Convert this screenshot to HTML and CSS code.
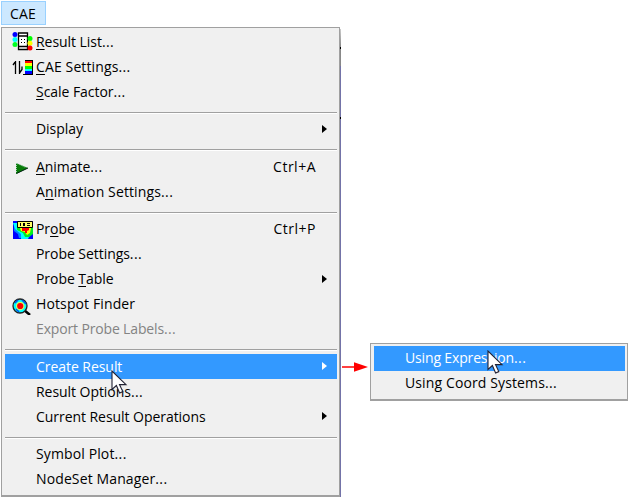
FILE: index.html
```html
<!DOCTYPE html>
<html lang="en">
<head>
<meta charset="utf-8">
<title>CAE menu</title>
<link rel="stylesheet" href="styles.css">
</head>
<body>
<div class="tab">CAE</div>
<div class="stage">
<nav class="menu main">
  <div class="item"><span class="icon"><svg width="22" height="22" viewBox="0 0 22 22"><path fill="#fff" d="M7 3h8v16H7z"/><g stroke="#000" fill="none" stroke-width="1.3"><path d="M6.500 3h9v16.500h-9zM6.500 6h9M6.500 16.500h9"/></g><path d="M9 9h1v1H9zm3 0h1v1h-1zM9 12h1v1H9zm3 0h1v1h-1z"/><circle cx="3" cy="4.500" r="2.500" fill="#00f"/><circle cx="3" cy="9.500" r="2.500" fill="#0ff"/><circle cx="3" cy="14.500" r="2.500" fill="#0f2"/><circle cx="18" cy="8.500" r="2.500" fill="#0f0"/><circle cx="18" cy="13.200" r="2.500" fill="#ff0"/><circle cx="18" cy="18" r="2.500" fill="#f00"/></svg></span><span class="label"><u>R</u>esult List<span class="dots">...</span></span></div>
  <div class="item"><span class="icon"><svg width="22" height="22" viewBox="0 0 22 22"><path d="M3.500 6v13M1 10l2.500-3.500M7.500 6v13M7.500 18l2.500-3.500v-3" stroke="#000" stroke-width="1.300" fill="none"/><path d="M13 5h8v15h-10v-1h2z"/><path fill="#f00" d="M13 6h7v2h-7z"/><path fill="#ff0" d="M13 8h7v3h-7z"/><path fill="#0f0" d="M13 11h7v3h-7z"/><path fill="#0ff" d="M13 14h7v2h-7z"/><path fill="#00f" d="M13 16h7v3h-7z"/></svg></span><span class="label wide"><u>C</u>AE Settings<span class="dots">...</span></span></div>
  <div class="item"><span class="icon"></span><span class="label"><u>S</u>cale Factor<span class="dots">...</span></span></div>
  <div class="sep"></div>
  <div class="item half"><span class="icon"></span><span class="label">Display</span><i class="arrow"></i></div>
  <div class="sep"></div>
  <div class="item"><span class="icon"><svg width="22" height="22" viewBox="0 0 22 22"><path d="M4 8l12 5-12 6z" fill="#087b08"/><path d="M4.500 8v10M5 8.500l9 4" stroke="#9ca" stroke-dasharray="1 1" fill="none"/><path d="M4.500 18.500L16 13" stroke="#021" fill="none"/></svg></span><span class="label"><u>A</u>nimate<span class="dots">...</span></span><span class="key">Ctrl+A</span></div>
  <div class="item"><span class="icon"></span><span class="label wide">A<u>n</u>imation Settings<span class="dots">...</span></span></div>
  <div class="sep"></div>
  <div class="item half"><span class="icon"><svg width="22" height="22" viewBox="0 0 22 22"><path fill="#00f" d="M1 3h20v18H1z"/><path fill="#08f" d="M2 7h4l2 5 3 3-1 5H7l-1-4-4-3z"/><path fill="#0ff" d="M1 5h4v4l5 4 8 4-2 4H9v-5l-6-5z"/><path fill="#0e2" d="M5 9h16v7l-4 3h-4l-2-4-6-3z"/><path fill="#ff0" d="M8 10h11l-1 5-3 2-2-3-4-1z"/><path fill="#f00" d="M10 10h7v2l-2 1v2h-2v-2h-3z"/><path fill="#ff6" stroke="#000" d="M5.500 3.500h15v6h-15z"/><path d="M8 5h1v3H8zm3 0h2v3h-2zm4 0h3v1h-3zm0 2h3v1h-3z"/></svg></span><span class="label">Pr<u>o</u>be</span><span class="key">Ctrl+P</span></div>
  <div class="item half"><span class="icon"></span><span class="label">Probe Settings<span class="dots">...</span></span></div>
  <div class="item half"><span class="icon"></span><span class="label">Probe <u>T</u>able</span><i class="arrow"></i></div>
  <div class="item half"><span class="icon"><svg width="22" height="22" viewBox="0 0 22 22"><path d="M12 17l6 5" stroke="#000" stroke-width="2.500"/><circle cx="8" cy="13" r="7" fill="#0ff" stroke="#222" stroke-width="1.300"/><path d="M3 10l3-3M10 7l4 4M4 16l3 3" stroke="#05e" stroke-width="1.500"/><circle cx="8.200" cy="13" r="4.300" fill="#cf6"/><circle cx="8.200" cy="13" r="3.100" fill="#f00"/></svg></span><span class="label wide">Hotspot Finder</span></div>
  <div class="item half disabled"><span class="icon"></span><span class="label tight">Export Probe Labels<span class="dots">...</span></span></div>
  <div class="sep"></div>
  <div class="item active"><span class="icon"></span><span class="label">Create Result</span><i class="arrow"></i></div>
  <div class="item"><span class="icon"></span><span class="label">Result Options<span class="dots">...</span></span></div>
  <div class="item"><span class="icon"></span><span class="label">Current Result Operations</span><i class="arrow"></i></div>
  <div class="sep"></div>
  <div class="item half"><span class="icon"></span><span class="label wide">Symbol Plot<span class="dots">...</span></span></div>
  <div class="item half"><span class="icon"></span><span class="label wide">NodeSet Manager<span class="dots">...</span></span></div>
</nav>
<svg class="pointer" width="30" height="12" viewBox="0 0 30 12"><path d="M2 6h14" stroke="#f00" stroke-width="1.500"/><path d="M14 1.300L28 6l-14 4.700z" fill="#f00"/></svg>
<nav class="menu submenu">
  <div class="item active"><span class="icon"></span><span class="label tight">Using Expression<span class="dots">...</span></span></div>
  <div class="item"><span class="icon"></span><span class="label wide">Using Coord Systems<span class="dots">...</span></span></div>
</nav>
</div>
<svg class="cursor cursor-main" width="17" height="25" viewBox="0 0 17 25"><path d="M1 1v18.500l4.400-4 3.200 7.500 3.200-1.400-3.300-7H15z" fill="#fff" stroke="#223" stroke-width="1.100"/></svg>
<svg class="cursor cursor-sub" width="17" height="25" viewBox="0 0 17 25"><path d="M1 1v18.500l4.400-4 3.200 7.500 3.200-1.400-3.300-7H15z" fill="#fff" stroke="#223" stroke-width="1.100"/></svg>
</body>
</html>
```
FILE: styles.css
```css
* { box-sizing: border-box; }
body {
  margin: 0;
  padding: 1px;
  width: 630px;
  height: 497px;
  overflow: hidden;
  background: #fff;
  color: #000;
  font: 14px/25px "Open Sans", "Noto Sans", sans-serif;
  letter-spacing: -0.05px;
}
.tab {
  width: 45px;
  height: 24px;
  padding-left: 8px;
  line-height: 23px;
  letter-spacing: 0.2px;
  background: #cce8ff;
  border: 1px solid #99d1ff;
}
.stage { display: flex; align-items: flex-start; margin-top: 2px; }
.menu {
  width: 339px;
  height: 470px;
  padding: 1px 2px;
  background: #f0f0f0;
  border: 1px solid #a0a0a0;
  border-bottom-width: 2px;
}
.main { position: relative; }
/* strip of the window behind the menu's right edge */
.main::after {
  content: "";
  position: absolute;
  top: 1px;
  right: -2px;
  bottom: -2px;
  width: 1px;
  background: linear-gradient(#ccc 0, #888 18px, #000 18px, #000 20px, #888 20px, #888 37px, #7373a8 37px, #7373a8 88px, #000 88px, #000 90px, #7373a8 90px);
}
.item { display: flex; height: 25px; padding: 0 10px 0 6px; margin-left: 1px; }
.half { line-height: 24px; }
.icon { width: 25px; flex: none; }
.icon svg { display: block; margin: 1px 0 0 1px; }
.label { flex: 1; white-space: pre; }
.wide { letter-spacing: 0.12px; }
.tight { letter-spacing: -0.15px; }
.dots { letter-spacing: 0.4px; }
u { text-decoration-thickness: 1px; text-underline-offset: 2px; }
.key { margin-right: 11px; letter-spacing: 0.5px; }
.arrow {
  width: 0;
  height: 0;
  margin: 8px 0 0;
  border: 4.5px solid transparent;
  border-left: 5px solid #000;
  border-right: 0;
}
.sep {
  height: 12.5px;
  padding: 7.5px 0 0 1px;
}
.sep::before {
  content: "";
  display: block;
  height: 2px;
  background: linear-gradient(#a0a0a0 50%, #fff 50%);
}
.active { background: #3399ff; color: #fff; }
.active .arrow { border-left-color: #fff; }
.disabled { color: #838383; }
.pointer { margin-top: 334px; flex: none; }
.submenu {
  width: 258px;
  height: 58px;
  margin-top: 316px;
  padding: 2px;
  border: 1px solid #a0a0a0;
  border-width: 1px 1px 2px;
}
.submenu .item { line-height: 24px; }
.cursor { position: absolute; }
.cursor-main { left: 111px; top: 370px; }
.cursor-sub { left: 487px; top: 350px; }
```
